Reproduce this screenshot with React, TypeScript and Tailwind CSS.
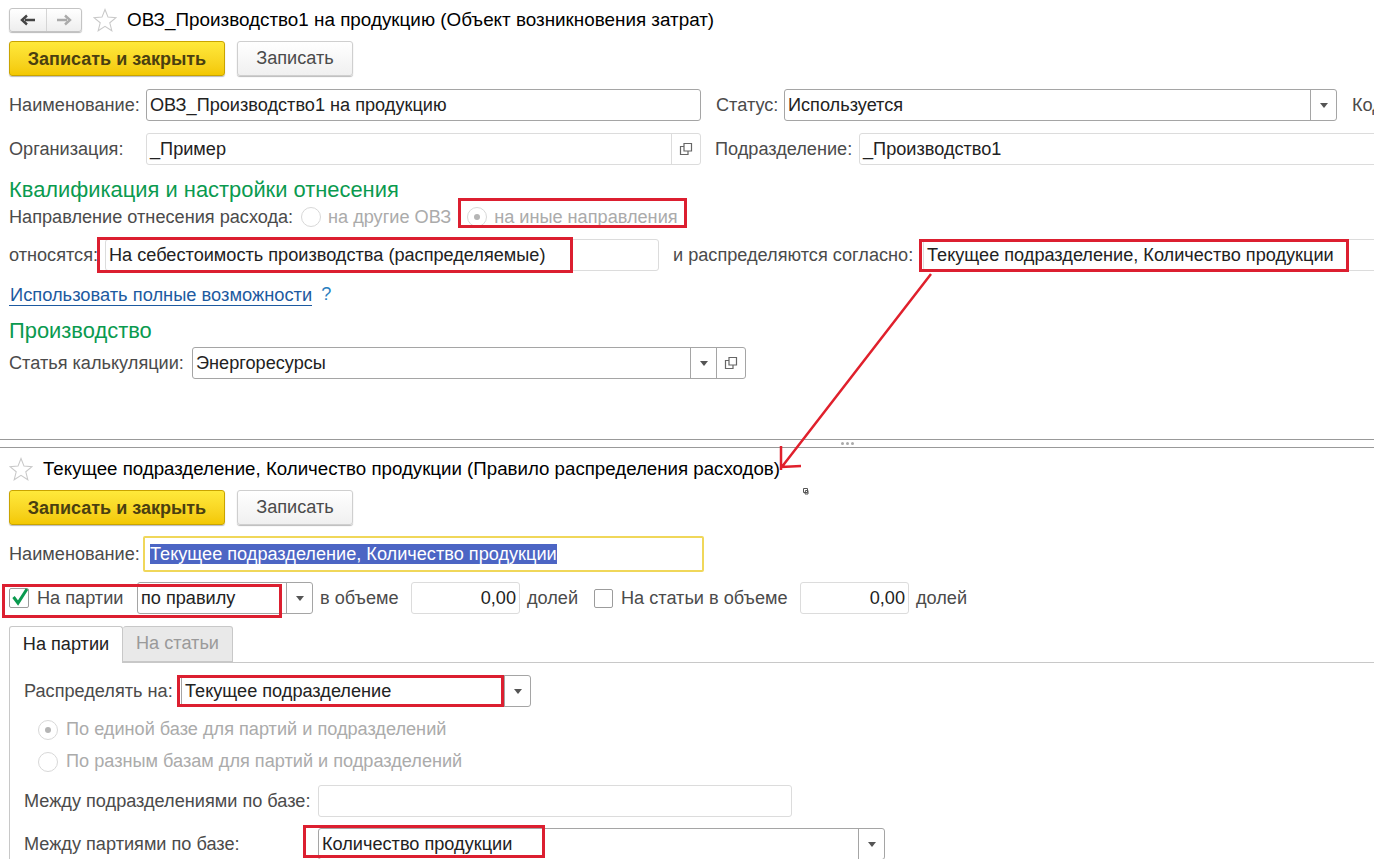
import type { ReactNode } from "react";

const Star = () => (
  <svg width="24" height="24" viewBox="0 0 24 24" className="shrink-0">
    <path
      d="M12 1.500l3 7.600 8 .6-6.200 5.100 2 7.900L12 18.400 5.200 22.700l2-7.900L1 9.700l8-.6z"
      fill="#fff"
      stroke="#c9c9c9"
      strokeWidth="1.100"
    />
  </svg>
);

const CopyIcon = () => (
  <svg width="14" height="14" viewBox="0 0 14 14">
    <path d="M5 1.500h7.500V9H5z M5 4.500H1.500v8H9V9" fill="none" stroke="#666" strokeWidth="1.200" />
  </svg>
);

const Arrow = () => <div className="h-0 w-0 border-x-[4px] border-t-[5px] border-x-transparent border-t-[#555]" />;

const Label = ({ w, className = "", children }: { w?: string; className?: string; children: ReactNode }) => (
  <span className={`shrink-0 whitespace-nowrap pt-[1px] text-[#4b4b4b] ${w ?? ""} ${className}`}>{children}</span>
);

const Field = ({
  className = "",
  value,
  dark,
  dropdown,
  copy,
  right,
}: {
  className?: string;
  value?: string;
  dark?: boolean;
  dropdown?: boolean;
  copy?: boolean;
  right?: boolean;
}) => (
  <div
    className={`flex h-[32px] shrink-0 items-stretch rounded-[3px] border bg-white ${
      dark ? "border-[#a5a5a5]" : "border-[#dcdcdc]"
    } ${className}`}
  >
    <div className={`flex-1 overflow-hidden whitespace-nowrap px-[3px] leading-[30px] text-[#222] ${right ? "text-right" : ""}`}>
      {value}
    </div>
    {dropdown && (
      <div className={`flex w-[26px] items-center justify-center border-l ${dark ? "border-[#a5a5a5]" : "border-[#dcdcdc]"}`}>
        <Arrow />
      </div>
    )}
    {copy && (
      <div className={`flex w-[29px] items-center justify-center border-l ${dark ? "border-[#a5a5a5]" : "border-[#dcdcdc]"}`}>
        <CopyIcon />
      </div>
    )}
  </div>
);

const Radio = ({ on }: { on?: boolean }) => (
  <div className="flex h-[20px] w-[20px] shrink-0 items-center justify-center rounded-full border border-[#d8d8d8] bg-white">
    {on && <div className="h-[6px] w-[6px] rounded-full bg-[#b5b5b5]" />}
  </div>
);

const Buttons = () => (
  <div className="ml-[9px] flex h-[35px] gap-[12px]">
    <div className="flex w-[216px] items-center justify-center rounded-[3px] border border-[#c9a400] bg-gradient-to-b from-[#ffe93a] to-[#f3c800] pt-[1px] text-[18px] font-bold text-[#4a3f10] shadow-[0_1px_1px_#bbb]">
      Записать и закрыть
    </div>
    <div className="flex w-[116px] items-center justify-center rounded-[3px] border border-[#cfcfcf] bg-gradient-to-b from-white to-[#f0f0f0] pt-[1px] text-[#4b4b4b] shadow-[0_1px_1px_#bbb]">
      Записать
    </div>
  </div>
);

const Box = ({ className }: { className: string }) => (
  <div className={`pointer-events-none absolute border-[3px] border-[#dc1f30] ${className}`} />
);

export default function App() {
  return (
    <div className="relative h-[859px] w-[1374px] overflow-hidden bg-white font-['Liberation_Sans',sans-serif] text-[18.150px] text-[#222]">
      {/* верхняя форма */}
      <div className="h-[439px] pt-[8px]">
        <div className="ml-[9px] flex h-[24px] items-center">
          <div className="flex h-[24px] w-[73px] rounded-[3px] border border-[#c4c4c4] bg-gradient-to-b from-white to-[#eeeeee] shadow-[0_1px_1px_#bbb]">
            <div className="flex w-[37px] items-center justify-center border-r border-[#d5d5d5]">
              <svg width="16" height="12" viewBox="0 0 16 12">
                <path d="M15 6H5M7 1.500L2 6l5 4.500" fill="none" stroke="#444" strokeWidth="2.400" />
              </svg>
            </div>
            <div className="flex flex-1 items-center justify-center">
              <svg width="16" height="12" viewBox="0 0 16 12">
                <path d="M1 6h10M9 1.500L14 6l-5 4.500" fill="none" stroke="#aaa" strokeWidth="2.400" />
              </svg>
            </div>
          </div>
          <div className="ml-[11px]">
            <Star />
          </div>
          <span className="ml-[10px] whitespace-nowrap text-[18.850px] text-black">ОВЗ_Производство1 на продукцию (Объект возникновения затрат)</span>
        </div>

        <div className="mt-[9px]">
          <Buttons />
        </div>

        <div className="mt-[13px] ml-[9px] flex items-center">
          <Label w="w-[137px]">Наименование:</Label>
          <Field className="w-[555px]" value="ОВЗ_Производство1 на продукцию" dark />
          <Label className="ml-[15px]" w="w-[68px]">Статус:</Label>
          <Field className="w-[553px]" value="Используется" dark dropdown />
          <Label className="ml-[15px]">Код</Label>
        </div>

        <div className="mt-[12px] ml-[9px] flex items-center">
          <Label w="w-[137px]">Организация:</Label>
          <Field className="w-[555px]" value="_Пример" copy />
          <Label className="ml-[14px]" w="w-[144px]">Подразделение:</Label>
          <Field className="w-[600px]" value="_Производство1" />
        </div>

        <div className="mt-[14px] ml-[9px] h-[22px] text-[21.900px] leading-[22px] text-[#0a9a4f]">Квалификация и настройки отнесения</div>

        <div className="mt-[3px] ml-[9px] flex h-[26px] items-center">
          <Label w="w-[292px]">Направление отнесения расхода:</Label>
          <Radio />
          <span className="ml-[7px] pt-[1px] text-[#ababab]">на другие ОВЗ</span>
          <div className="ml-[16px]">
            <Radio on />
          </div>
          <span className="ml-[7px] pt-[1px] text-[#ababab]">на иные направления</span>
        </div>

        <div className="mt-[9px] ml-[9px] flex items-center">
          <Label w="w-[96px]">относятся:</Label>
          <Field className="w-[554px]" value="На себестоимость производства (распределяемые)" />
          <Label className="ml-[14px]" w="w-[250px]">и распределяются согласно:</Label>
          <Field className="w-[600px]" value="Текущее подразделение, Количество продукции" />
        </div>

        <div className="mt-[12px] ml-[9px] flex h-[24px] items-center">
          <span className="border-b border-[#1d5aa0] pl-[1px] text-[18.300px] leading-[21px] text-[#1d5aa0]">Использовать полные возможности</span>
          <span className="ml-[9px] text-[#2a7fc0]">?</span>
        </div>

        <div className="mt-[13px] ml-[9px] h-[22px] text-[21.900px] leading-[22px] text-[#0a9a4f]">Производство</div>

        <div className="mt-[5px] ml-[9px] flex items-center">
          <Label w="w-[183px]">Статья калькуляции:</Label>
          <Field className="w-[554px]" value="Энергоресурсы" dark dropdown copy />
        </div>
      </div>

      {/* разделитель */}
      <div className="flex h-[9px] items-center justify-center gap-[2px] border-y border-[#999] pl-[320px]">
        <div className="h-[3px] w-[3px] rounded-full bg-[#aaa]" />
        <div className="h-[3px] w-[3px] rounded-full bg-[#aaa]" />
        <div className="h-[3px] w-[3px] rounded-full bg-[#aaa]" />
      </div>

      {/* нижняя форма */}
      <div className="ml-[9px] mt-[9px] flex h-[24px] items-center">
        <Star />
        <span className="ml-[10px] whitespace-nowrap text-[18.700px] text-black">Текущее подразделение, Количество продукции (Правило распределения расходов)</span>
      </div>

      <div className="mt-[9px]">
        <Buttons />
      </div>

      <div className="mt-[11px] ml-[9px] flex items-center">
        <Label w="w-[134px]">Наименование:</Label>
        <div className="flex h-[36px] w-[561px] items-center rounded-[2px] border-2 border-[#f0d75a] px-[5px]">
          <span className="whitespace-nowrap bg-[#4c65c4] leading-[20px] text-white">Текущее подразделение, Количество продукции</span>
        </div>
      </div>

      <div className="mt-[10px] ml-[9px] flex items-center">
        <div className="relative h-[20px] w-[20px] shrink-0 rounded-[2px] border border-[#9c9c9c]">
          <svg width="22" height="22" viewBox="0 0 22 22" className="absolute -left-[1px] -top-[3px]">
            <path d="M4.500 11l4.500 6L18 3" fill="none" stroke="#0a9a4f" strokeWidth="3" />
          </svg>
        </div>
        <Label className="ml-[8px]" w="w-[100px]">На партии</Label>
        <Field className="w-[176px]" value="по правилу" dark dropdown />
        <Label className="ml-[7px]" w="w-[91px]">в объеме</Label>
        <Field className="w-[109px]" value="0,00" right />
        <Label className="ml-[7px]" w="w-[67px]">долей</Label>
        <div className="h-[19px] w-[19px] shrink-0 rounded-[2px] border border-[#9c9c9c]" />
        <Label className="ml-[8px]" w="w-[179px]">На статьи в объеме</Label>
        <Field className="w-[109px]" value="0,00" right />
        <Label className="ml-[7px]">долей</Label>
      </div>

      <div className="mt-[12px] ml-[9px] flex h-[37px]">
        <div className="z-10 flex h-[37px] w-[114px] items-center justify-center rounded-t-[3px] border-x border-t border-[#c8c8c8] bg-white">На партии</div>
        <div className="flex h-[36px] w-[110px] items-center justify-center rounded-t-[3px] border-y border-r border-[#c8c8c8] bg-[#e9e9e9] text-[#9a9a9a]">На статьи</div>
      </div>

      <div className="ml-[9px] -mt-[1px] h-[300px] border-l border-t border-[#c8c8c8] pl-[14px] pt-[12px]">
        <div className="flex items-center">
          <Label w="w-[157px]">Распределять на:</Label>
          <Field className="w-[350px]" value="Текущее подразделение" dark dropdown />
        </div>
        <div className="mt-[11px] ml-[14px] flex h-[24px] items-center text-[#ababab]">
          <Radio on />
          <span className="ml-[8px]">По единой базе для партий и подразделений</span>
        </div>
        <div className="mt-[8px] ml-[14px] flex h-[24px] items-center text-[#ababab]">
          <Radio />
          <span className="ml-[8px]">По разным базам для партий и подразделений</span>
        </div>
        <div className="mt-[11px] flex items-center">
          <Label w="w-[294px]">Между подразделениями по базе:</Label>
          <Field className="w-[474px]" />
        </div>
        <div className="mt-[11px] flex items-center">
          <Label w="w-[294px]">Между партиями по базе:</Label>
          <Field className="w-[567px]" value="Количество продукции" dark dropdown />
        </div>
      </div>

      {/* пометки поверх формы */}
      <Box className="left-[458px] top-[198px] h-[30px] w-[229px]" />
      <Box className="left-[97px] top-[237px] h-[36px] w-[476px]" />
      <Box className="left-[919px] top-[239px] h-[33px] w-[430px]" />
      <Box className="left-[2px] top-[584px] h-[34px] w-[280px]" />
      <Box className="left-[177px] top-[675px] h-[32px] w-[327px]" />
      <Box className="left-[303px] top-[825px] h-[33px] w-[242px]" />

      <svg width="1374" height="859" viewBox="0 0 1374 859" className="pointer-events-none absolute left-0 top-0">
        <path d="M931 274L781 468M781 446v24M781 467l20-1" fill="none" stroke="#e0202c" strokeWidth="2.500" />
        <path d="M803.500 488.500h4v4h-4zM805.500 490.500h2.500v3.500h-3z" fill="none" stroke="#555" strokeWidth="1" />
      </svg>
    </div>
  );
}
